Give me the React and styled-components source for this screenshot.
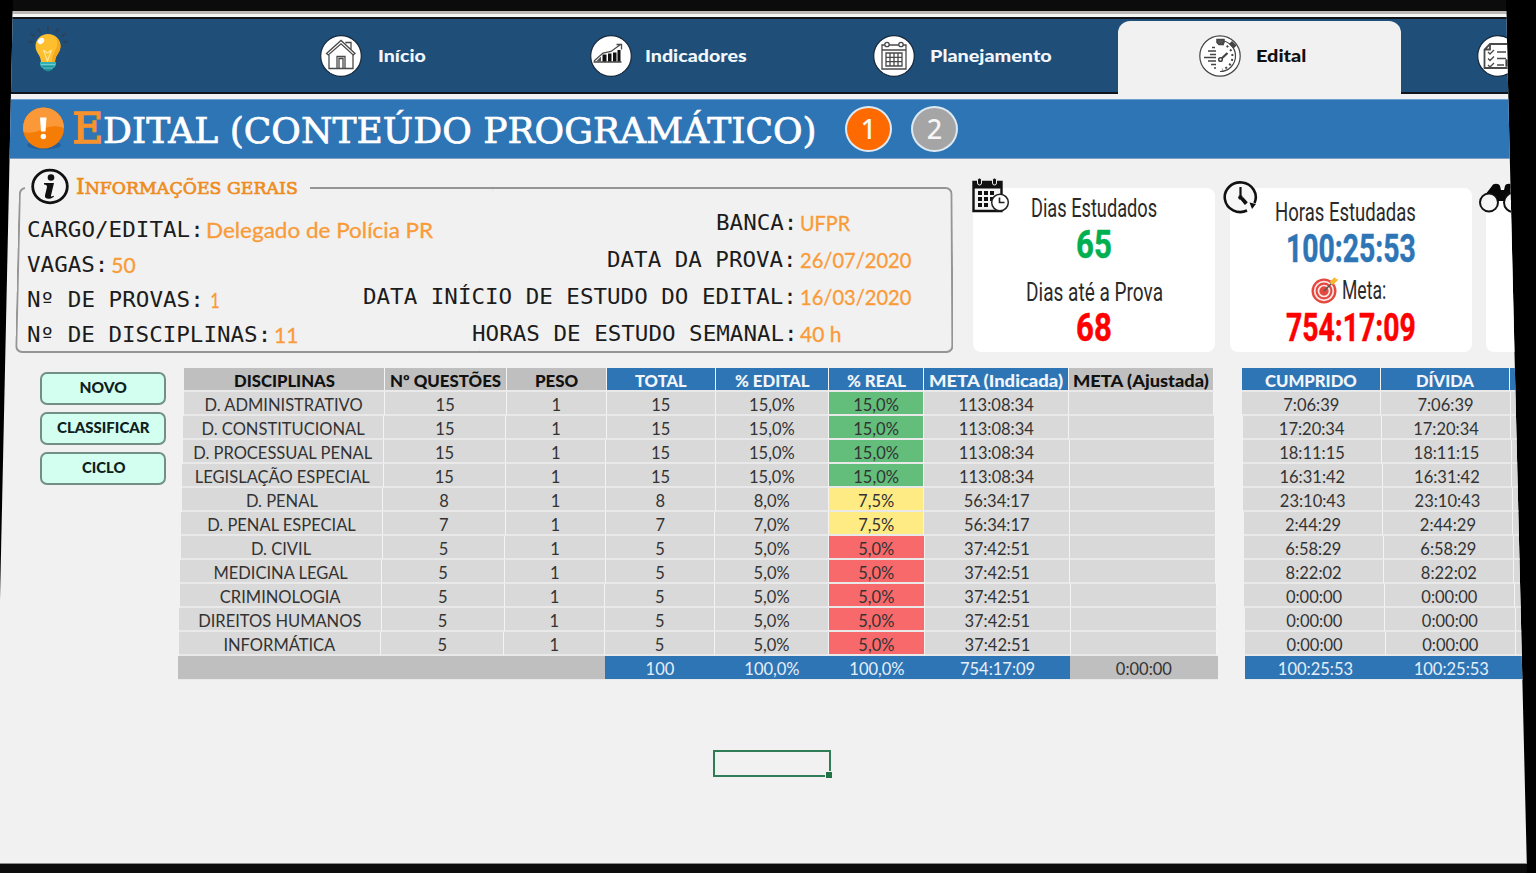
import { useLayoutEffect, useRef, useState } from "react";
import styled, { createGlobalStyle } from "styled-components";

// ------ data ------//
const disciplinas = [
  ["D. ADMINISTRATIVO", "15", "1", "15", "15,0%", "15,0%", "113:08:34", "7:06:39"],
  ["D. CONSTITUCIONAL", "15", "1", "15", "15,0%", "15,0%", "113:08:34", "17:20:34"],
  ["D. PROCESSUAL PENAL", "15", "1", "15", "15,0%", "15,0%", "113:08:34", "18:11:15"],
  ["LEGISLAÇÃO ESPECIAL", "15", "1", "15", "15,0%", "15,0%", "113:08:34", "16:31:42"],
  ["D. PENAL", "8", "1", "8", "8,0%", "7,5%", "56:34:17", "23:10:43"],
  ["D. PENAL ESPECIAL", "7", "1", "7", "7,0%", "7,5%", "56:34:17", "2:44:29"],
  ["D. CIVIL", "5", "1", "5", "5,0%", "5,0%", "37:42:51", "6:58:29"],
  ["MEDICINA LEGAL", "5", "1", "5", "5,0%", "5,0%", "37:42:51", "8:22:02"],
  ["CRIMINOLOGIA", "5", "1", "5", "5,0%", "5,0%", "37:42:51", "0:00:00"],
  ["DIREITOS HUMANOS", "5", "1", "5", "5,0%", "5,0%", "37:42:51", "0:00:00"],
  ["INFORMÁTICA", "5", "1", "5", "5,0%", "5,0%", "37:42:51", "0:00:00"],
];
const realColors = { "15,0%": "#63be7b", "7,5%": "#ffeb84", "5,0%": "#f8696b" };

const headers = [
  { text: "DISCIPLINAS", w: 101 },
  { text: "Nº QUESTÕES", w: 111 },
  { text: "PESO", w: 43 },
  { text: "TOTAL", w: 52, blue: true },
  { text: "% EDITAL", w: 75, blue: true },
  { text: "% REAL", w: 59, blue: true },
  { text: "META (Indicada)", w: 134, blue: true },
  { text: "META (Ajustada)", w: 136 },
];

const leftInfo = [
  ["CARGO/EDITAL:", "Delegado de Polícia PR", 227],
  ["VAGAS:", "50", 24],
  ["Nº DE PROVAS:", " 1", 14],
  ["Nº DE DISCIPLINAS:", "11", 24],
];
const rightInfo = [
  ["BANCA:", "UFPR", 50],
  ["DATA DA PROVA:", "26/07/2020", 111],
  ["DATA INÍCIO DE ESTUDO DO EDITAL:", "16/03/2020", 111],
  ["HORAS DE ESTUDO SEMANAL:", "40 h", 41],
];

// ------ styled components start ------//
const GlobalStyle = createGlobalStyle`
  * { box-sizing: border-box; }
  body {
    margin: 0;
    background: #000;
    overflow: hidden;
  }
`;
const Page = styled.div`
  width: 1536px;
  height: 873px;
  overflow: hidden;
  background: #0c0c0c;
  padding-top: 11px;
  font-family: Lato, "Liberation Sans", sans-serif;
  clip-path: polygon(13px 0, 1506px 0, 1527px 873px, 0 873px, 0 600px);
`;
const Screen = styled.div`
  height: 853px;
  background: #f1f1f1;
  border-bottom: 1px solid #8c8c8c;
`;
const FitBox = styled.span`
  display: inline-block;
  flex: none;
  text-align: left;
  white-space: pre;
`;
const FitText = styled.span`
  display: inline-block;
  transform-origin: 0 50%;
`;
const TopLine = styled.div`
  height: 6px;
  background: linear-gradient(#bdb9b9 0 3px, #f6f6f6 3px);
`;
const Nav = styled.nav`
  display: flex;
  height: 77px;
  background: #1f4e78;
  border-top: 2px solid #10161c;
  border-bottom: 2px solid #10161c;
`;
const Brand = styled.div`
  flex: none;
  width: 269px;
  padding: 7px 0 0 28px;
`;
const Tab = styled.div`
  display: flex;
  align-items: center;
  flex: none;
  width: ${(p) => p.$width || 283}px;
  height: 73px;
  padding-left: ${(p) => p.$pad}px;
  gap: ${(p) => p.$gap}px;
  color: ${(p) => (p.$active ? "#111" : "#f2f6fa")};
  font-size: 17.5px;
  font-weight: 900;
  ${(p) =>
    p.$active &&
    `
    height: 75px;
    margin-top: 2px;
    padding-bottom: 6px;
    background: #f1f1f1;
    border-radius: 12px 12px 0 0;
  `}
  svg {
    flex: none;
  }
`;
const TitleBar = styled.header`
  display: flex;
  align-items: center;
  height: 60px;
  margin-top: 5px;
  padding-left: 22px;
  background: #2e75b6;
  border-top: 1px solid #6f9fce;
  border-bottom: 1px solid #7f9fc0;
`;
const Title = styled.h1`
  display: flex;
  align-items: baseline;
  width: 761px;
  margin: 0 0 0 7px;
  color: #fff;
  font: 400 35px/58px "DejaVu Serif", serif;
  -webkit-text-stroke: 0.7px currentColor;
`;
const Initial = styled.span`
  display: inline-block;
  color: #f7922d;
  font-size: 43px;
  -webkit-text-stroke: 1.4px currentColor;
`;
const Step = styled.div`
  width: 47px;
  height: 46px;
  margin: 0 19px 0 ${(p) => p.$ml || 0}px;
  border: 2px solid #dfe9f3;
  border-radius: 50%;
  background: ${(p) => p.$bg};
  color: #f6f6f6;
  font: 500 27px/42px "Noto Sans", sans-serif;
  text-align: center;
`;
const Summary = styled.section`
  display: flex;
  height: 209px;
  padding: 29px 0 0 17px;
`;
const InfoPanel = styled.div`
  position: relative;
  display: flex;
  flex: none;
  width: 936px;
  height: 164px;
  padding-left: 10px;
  &::before,
  &::after {
    content: "";
    position: absolute;
    top: -1px;
    bottom: -1px;
    width: calc(50% + 4px);
    border: 2px solid #959595;
  }
  &::before {
    left: 0;
    border-right: 0;
    border-radius: 7px 0 0 7px;
    transform: skewX(-1.3deg);
  }
  &::after {
    right: 0;
    border-left: 0;
    border-radius: 0 7px 7px 0;
    transform: skewX(0.3deg);
  }
`;
const Legend = styled.div`
  position: absolute;
  z-index: 1;
  left: 8px;
  top: -21px;
  display: flex;
  align-items: center;
  width: 285px;
  height: 40px;
  padding-left: 6px;
  gap: 7px;
  background: #f1f1f1;
  color: #ee8c1e;
  font: 400 17.5px/24px "DejaVu Serif", serif;
  -webkit-text-stroke: 0.7px currentColor;
  big {
    font-size: 22px;
  }
`;
const InfoList = styled.dl`
  position: relative;
  z-index: 1;
  flex: none;
  margin: 0;
  padding-top: ${(p) => p.$top}px;
  width: ${(p) => p.$width}px;
`;
const InfoRow = styled.div`
  display: flex;
  align-items: center;
  justify-content: ${(p) => p.$justify || "flex-start"};
  height: ${(p) => p.$h}px;
`;
const Label = styled.dt`
  display: flex;
  flex: none;
  color: #1c1c1c;
  font: 400 20.5px/30px "DejaVu Sans Mono", monospace;
`;
const Value = styled.dd`
  flex: none;
  width: ${(p) => (p.$width ? p.$width + "px" : "auto")};
  margin: 1px 0 0 3px;
  color: #f99b38;
  font-size: 21px;
  line-height: 30px;
  -webkit-text-stroke: 0.3px currentColor;
`;
const Card = styled.div`
  position: relative;
  display: flex;
  flex-direction: column;
  align-items: center;
  flex: none;
  width: 242px;
  height: 164px;
  margin-left: ${(p) => p.$ml}px;
  padding-top: ${(p) => p.$top || 0}px;
  border-radius: 8px;
  background: #fff;
  font-family: Roboto, sans-serif;
`;
const CardIcon = styled.div`
  position: absolute;
  left: ${(p) => p.$left}px;
  top: ${(p) => p.$y}px;
`;
const CardLabel = styled.div`
  display: flex;
  align-items: center;
  gap: 3px;
  height: 36px;
  margin-top: ${(p) => p.$mt || 0}px;
  padding-right: ${(p) => p.$pr || 0}px;
  color: #2a2a2a;
  font-size: 26px;
`;
const CardNumber = styled.div`
  height: 36px;
  color: ${(p) => p.$color};
  font-size: 39px;
  font-weight: 700;
  line-height: ${(p) => p.$lh || 38}px;
  -webkit-text-stroke: 0.5px currentColor;
`;
const Work = styled.section`
  display: flex;
  align-items: flex-start;
`;
const Actions = styled.div`
  display: flex;
  flex-direction: column;
  gap: 8px;
  width: 184px;
  padding: 4px 0 0 40px;
`;
const Button = styled.button`
  width: 126px;
  height: 33px;
  margin-bottom: -1px;
  padding: 0 0 3px;
  border: 2px solid #728f87;
  border-radius: 7px;
  background: #d2fff0;
  color: #10201c;
  font: 900 15.5px/20px Lato, sans-serif;
`;
const Table = styled.div`
  flex: none;
  width: ${(p) => p.$width}px;
  margin-right: ${(p) => p.$mr || 0}px;
`;
// rows get a little wider towards the bottom of the sheet
const Row = styled.div`
  display: grid;
  grid-template-columns: ${(p) => p.$cols};
  width: ${(p) => p.$base + p.$grow * p.$i}px;
  height: 24px;
  margin-left: ${(p) => p.$shift * p.$i}px;
`;
const Cell = styled.div`
  overflow: hidden;
  border-right: ${(p) => (p.$flat ? 0 : 1)}px solid #f4f4f4;
  border-bottom: ${(p) => (p.$flat ? 1 : 2)}px solid #e9e9e9;
  background: ${(p) => p.$bg || "#d9d9d9"};
  color: ${(p) => p.$color || "#333"};
  font-size: 16.5px;
  font-weight: ${(p) => (p.$bold ? 900 : 400)};
  line-height: 26px;
  text-align: center;
  white-space: nowrap;
`;
const Selection = styled.div`
  position: relative;
  width: 118px;
  height: 27px;
  margin: 70px 0 0 713px;
  border: 2px solid #2f7d57;
  &::after {
    content: "";
    position: absolute;
    right: -3px;
    bottom: -3px;
    width: 6px;
    height: 6px;
    border: 1px solid #f1f1f1;
    border-width: 1px 0 0 1px;
    background: #217346;
  }
`;
// ------ styled components end ------//

// squeezes or stretches a line of text to the given width
const Fit = ({ w, children }) => {
  const ref = useRef(null);
  const [scale, setScale] = useState(1);
  useLayoutEffect(() => {
    setScale(w / ref.current.offsetWidth);
  }, [w]);
  return (
    <FitBox style={{ width: w }}>
      <FitText ref={ref} style={{ transform: `scaleX(${scale})` }}>
        {children}
      </FitText>
    </FitBox>
  );
};

// ------ icons ------//
const Bulb = () => (
  <svg width="40" height="48" viewBox="0 0 40 48">
    <g stroke="#2d4258" strokeWidth="1.8" strokeLinecap="round">
      <path d="M20 1v3M10 3l2 3M30 3l-2 3M3 8l3 2M37 8l-3 2M1 16h3M36 16h3" />
    </g>
    <path d="M20 8c-7 0-12.500 5-12.500 12 0 7 5 8 5.500 16h14c.5-8 5.500-9 5.500-16 0-7-5.500-12-12.500-12z" fill="#fdbf2d" />
    <path d="M27 11c3 3 3 9 0 14-2 4-3 7-3 11h3c.5-8 5.500-9 5.500-16 0-4-2-7-5.500-9z" fill="#f5a81c" />
    <ellipse cx="13" cy="15" rx="3.500" ry="2.600" fill="#fff" transform="rotate(-40 13 15)" />
    <path d="M15.500 24l4 11 4-11M15.500 24l4 3 4-3" fill="none" stroke="#ffe596" strokeWidth="1.200" />
    <path d="M12 36h16v3l-2 3H14l-2-3z" fill="#35b0b5" />
    <path d="M14 40h12l-2 4-4 1.500-4-1.500z" fill="#1e8f98" />
    <path d="M13 38.500h14M15 42h10" stroke="#7dd3d4" strokeWidth=".8" />
  </svg>
);

const Disc = ({ stroke = "#16283a", children }) => (
  <svg width="42" height="42" viewBox="0 0 42 42" fill="none" stroke="#4a4a4a" strokeWidth="1.300">
    <circle cx="21" cy="21" r="20.300" fill="#fff" stroke={stroke} strokeWidth="1.200" />
    {children}
  </svg>
);

const HomeIcon = () => (
  <Disc>
    <path d="M6.500 18.500L21 5.500l14 13-1.800 1.500L21 8.800 8.300 20z" />
    <path d="M9 20v13.500h24V20M17 33.500V21.500h8v12M19 33.500V23.500h4v10" />
    <path d="M26 8.500V7.500h5v7" />
  </Disc>
);
const ChartIcon = () => (
  <Disc>
    <path d="M3.500 27h28M4 26l9-8 8-1.500 9.500-7M26.500 9.500h5v5" />
    <path d="M12.500 19.500h4v7h-4zM18 18.500h3.500v8H18zM23 17.500h3.500v9H23zM27.500 15h3v11.500h-3z" fill="#111" stroke="none" />
    <path d="M6 26.500l5-5v5z" fill="#555" stroke="none" />
  </Disc>
);
const PlanIcon = () => (
  <Disc>
    <path d="M9 10h24v24H9zM9 15h24" />
    <circle cx="14" cy="9.500" r="2.200" fill="#fff" />
    <circle cx="28" cy="9.500" r="2.200" fill="#fff" />
    <path d="M13 18h16v13H13zM13 22.300h16M13 26.600h16M17 18v13M21 18v13M25 18v13" />
  </Disc>
);
const TimerIcon = () => (
  <svg width="44" height="42" viewBox="0 0 44 42" fill="none" stroke="#444" strokeWidth="1.500">
    <circle cx="22" cy="21" r="20.200" fill="#fff" strokeWidth="1.200" />
    <path d="M22 5.500a15.500 15.500 0 0 1 0 31" strokeWidth="1.200" />
    <path d="M24 9a13 13 0 0 1 0 25.500" strokeDasharray="2 3" strokeWidth="2" />
    <path d="M14 12.500h3M10 16h8M12 19.500h6M6 22.500h12M10 26h8M13 29.500h5M16 33h2" />
    <path d="M19 4.500h7v3l-2 2h-3l-2-2z" fill="#555" />
    <path d="M34 7l3.500 3.500-2 2L32 9z" fill="#444" />
    <path d="M21.500 25.500l8-7.500" strokeWidth="2.200" />
    <circle cx="22.500" cy="24.500" r="1.800" fill="#fff" />
  </svg>
);
const ListIcon = () => (
  <Disc>
    <path d="M13 9h26v24H7.500V14.500zM13 9v5.500H7.500" strokeWidth="1.800" />
    <path d="M11 17l2 2 4-4M11 23.500l2 2 4-4M11 30l2 2 4-4M20 17h9M20 23.500h9M20 30h7" />
    <path d="M29 25h8v6h-8z" fill="#222" />
  </Disc>
);
const AlertIcon = () => (
  <svg width="43" height="46" viewBox="0 0 43 46">
    <ellipse cx="22" cy="39" rx="17" ry="4.500" fill="#1f5a92" opacity=".7" />
    <circle cx="21.500" cy="22" r="20.500" fill="#f57c05" />
    <path d="M1 22a20.500 20.500 0 0 1 41 0c-7-3-15-2-21 1s-14 5-19.500 3z" fill="#fb9837" />
    <path d="M18 11.500h6.500l-1 14h-4.500z" fill="#fff" />
    <circle cx="21.300" cy="30.500" r="2.700" fill="#fff" />
  </svg>
);
const InfoIcon = () => (
  <svg width="38" height="38" viewBox="0 0 38 38">
    <ellipse cx="19" cy="18.500" rx="17.300" ry="16.300" fill="#f4f4f4" stroke="#111" strokeWidth="2.800" />
    <circle cx="20" cy="9.500" r="3.300" fill="#111" />
    <path d="M13 15h10l-3 12.500c-.3 1.500 1 1.300 2.500.3l.5 1c-3 2.700-10 3.200-9-1.500l2-8.300c.3-1.300-.8-2.500-3-2.600z" fill="#111" />
  </svg>
);
const CalendarClock = () => (
  <svg width="38" height="36" viewBox="0 0 38 36">
    <path d="M1.500 5h28v29h-28z" fill="#f4f4f4" stroke="#111" strokeWidth="2.400" />
    <path d="M1 4h29v7.500H1z" fill="#111" />
    <rect x="5.500" y="1" width="4" height="7" rx="2" fill="#111" stroke="#f1f1f1" />
    <rect x="20.500" y="1" width="4" height="7" rx="2" fill="#111" stroke="#f1f1f1" />
    <path d="M6 14h4v4H6zM12 14h4v4h-4zM18 14h4v4h-4zM6 20h4v4H6zM12 20h4v4h-4zM6 26h4v4H6zM12 26h4v4h-4zM18 20h3v4h-3z" fill="#111" />
    <circle cx="28" cy="25.500" r="8.300" fill="#fff" stroke="#222" strokeWidth="1.500" />
    <path d="M27.500 20.500V25.500h5" fill="none" stroke="#222" strokeWidth="1.600" />
  </svg>
);
const ClockIcon = () => (
  <svg width="36" height="34" viewBox="0 0 36 34">
    <path d="M24 30.500A15.500 14.800 0 1 1 31.500 23" fill="#f7f7f7" stroke="#111" strokeWidth="2.600" />
    <path d="M26.500 22.500l6.500 1.500-4 5z" fill="#111" />
    <path d="M17.500 7v10.500l5 6.500" fill="none" stroke="#111" strokeWidth="2.200" />
    <circle cx="17.500" cy="17.500" r="2.300" fill="#111" />
    <path d="M19 18.500l4.500 5" stroke="#111" strokeWidth="3.400" />
  </svg>
);
const Binoculars = () => (
  <svg width="60" height="32" viewBox="0 0 60 32">
    <path d="M2 18L13 4c1-3 7-3 8 0l1 4h3l1-4c1-3 6-3 8 0l3 14H17z" fill="#080808" />
    <circle cx="10" cy="20.500" r="9" fill="#f6f6f6" stroke="#111" strokeWidth="2" />
    <circle cx="34.500" cy="20.500" r="9.500" fill="#f6f6f6" stroke="#111" strokeWidth="2" />
    <path d="M18 14h8v5h-8z" fill="#080808" />
  </svg>
);
const Target = () => (
  <svg width="28" height="28" viewBox="0 0 28 28" fill="none">
    <circle cx="13" cy="15" r="12.500" fill="#e4483f" />
    <circle cx="13" cy="15" r="9.300" stroke="#fbe9e7" strokeWidth="1.700" />
    <circle cx="13" cy="15" r="5.500" stroke="#fbe9e7" strokeWidth="1.700" />
    <path d="M13 15l10-10" stroke="#555" strokeWidth="1.500" />
    <path d="M19 5.500l5-4.500.8 2L27.500 3.500l-5 5-2.500-.5z" fill="#f5b82e" />
  </svg>
);

const LabelText = ({ text }) => <Fit w={text.length * 13.56}>{text}</Fit>;

const mainCols = "201fr 122fr 100fr 109fr 113fr 95fr 145fr 145fr";
const main = { $cols: mainCols, $base: 1030, $grow: 0.8, $shift: -0.5 };
const side = { $cols: "139fr 129fr 32fr", $base: 300, $grow: 0.35, $shift: 0.25 };

const App = () => {
  return (
    <Page>
      <GlobalStyle />
      <Screen>
        <TopLine />
        <Nav>
          <Brand>
            <Bulb />
          </Brand>
          <Tab $pad={51} $gap={16}>
            <HomeIcon />
            <Fit w={48}>Início</Fit>
          </Tab>
          <Tab $pad={38} $gap={13}>
            <ChartIcon />
            <Fit w={102}>Indicadores</Fit>
          </Tab>
          <Tab $pad={38} $gap={15}>
            <PlanIcon />
            <Fit w={122}>Planejamento</Fit>
          </Tab>
          <Tab $pad={80} $gap={14} $active>
            <TimerIcon />
            <Fit w={50}>Edital</Fit>
          </Tab>
          <Tab $pad={76} $gap={14}>
            <ListIcon />
          </Tab>
        </Nav>
        <TitleBar>
          <AlertIcon />
          <Title>
            <Initial>
              <Fit w={31}>E</Fit>
            </Initial>
            <Fit w={714}>DITAL (CONTEÚDO PROGRAMÁTICO)</Fit>
          </Title>
          <Step $bg="#ff6a00" $ml={12}>1</Step>
          <Step $bg="#a5a5a5">2</Step>
        </TitleBar>

        <Summary>
          <InfoPanel>
            <Legend>
              <InfoIcon />
              <Fit w={222}>
                <big>I</big>NFORMAÇÕES GERAIS
              </Fit>
            </Legend>
            <InfoList $top={24} $width={326}>
              {leftInfo.map(([label, value, w]) => (
                <InfoRow key={label} $h={35}>
                  <Label>
                    <LabelText text={label} />
                  </Label>
                  <Value>
                    <Fit w={w}>{value}</Fit>
                  </Value>
                </InfoRow>
              ))}
            </InfoList>
            <InfoList $top={16} $width={600}>
              {rightInfo.map(([label, value, w]) => (
                <InfoRow key={label} $h={37} $justify="flex-end">
                  <Label>
                    <LabelText text={label} />
                  </Label>
                  <Value $width={153}>
                    <Fit w={w}>{value}</Fit>
                  </Value>
                </InfoRow>
              ))}
            </InfoList>
          </InfoPanel>

          <Card $ml={20} $top={2}>
            <CardIcon $left={-1} $y={-11}>
              <CalendarClock />
            </CardIcon>
            <CardLabel>
              <Fit w={126}>Dias Estudados</Fit>
            </CardLabel>
            <CardNumber $color="#00b050">
              <Fit w={36}>65</Fit>
            </CardNumber>
            <CardLabel $mt={12}>
              <Fit w={137}>Dias até a Prova</Fit>
            </CardLabel>
            <CardNumber $color="#ff0000" $lh={36}>
              <Fit w={36}>68</Fit>
            </CardNumber>
          </Card>
          <Card $ml={15} $top={6}>
            <CardIcon $left={-7} $y={-8}>
              <ClockIcon />
            </CardIcon>
            <CardLabel $pr={11}>
              <Fit w={141}>Horas Estudadas</Fit>
            </CardLabel>
            <CardNumber $color="#2e75b6" $lh={39}>
              <Fit w={130}>100:25:53</Fit>
            </CardNumber>
            <CardLabel $mt={6} $pr={6}>
              <Target />
              <Fit w={44}>Meta:</Fit>
            </CardLabel>
            <CardNumber $color="#ff0000" $lh={40}>
              <Fit w={130}>754:17:09</Fit>
            </CardNumber>
          </Card>
          <Card $ml={14}>
            <CardIcon $left={-7} $y={-6}>
              <Binoculars />
            </CardIcon>
          </Card>
        </Summary>

        <Work>
          <Actions>
            <Button>
              <Fit w={47}>NOVO</Fit>
            </Button>
            <Button>
              <Fit w={93}>CLASSIFICAR</Fit>
            </Button>
            <Button>
              <Fit w={43}>CICLO</Fit>
            </Button>
          </Actions>
          <Table $width={1030} $mr={28}>
            <Row {...main} $i={0}>
              {headers.map((h) => (
                <Cell key={h.text} $bold $bg={h.blue ? "#2e75b6" : "#bfbfbf"} $color={h.blue ? "#f2f6fa" : "#111"}>
                  <Fit w={h.w}>{h.text}</Fit>
                </Cell>
              ))}
            </Row>
            {disciplinas.map((d, i) => (
              <Row key={d[0]} {...main} $i={i + 1}>
                {d.slice(0, 7).map((text, c) => (
                  <Cell key={c} $bg={c === 5 && realColors[text]}>
                    {text}
                  </Cell>
                ))}
                <Cell />
              </Row>
            ))}
            <Row {...main} $cols="423fr 109fr 113fr 95fr 144fr 146fr" $i={12}>
              <Cell $flat $bg="#bfbfbf" />
              {["100", "100,0%", "100,0%", "754:17:09"].map((text, c) => (
                <Cell key={c} $flat $bg="#2e75b6" $color="#e6eff8">
                  {text}
                </Cell>
              ))}
              <Cell $flat $bg="#bfbfbf">0:00:00</Cell>
            </Row>
          </Table>
          <Table $width={294}>
            <Row {...side} $i={0}>
              <Cell $bold $bg="#2e75b6" $color="#f2f6fa">
                <Fit w={92}>CUMPRIDO</Fit>
              </Cell>
              <Cell $bold $bg="#2e75b6" $color="#f2f6fa">
                <Fit w={58}>DÍVIDA</Fit>
              </Cell>
              <Cell $bg="#2e75b6" />
            </Row>
            {disciplinas.map((d, i) => (
              <Row key={d[0]} {...side} $i={i + 1}>
                <Cell>{d[7]}</Cell>
                <Cell>{d[7]}</Cell>
                <Cell />
              </Row>
            ))}
            <Row {...side} $i={12}>
              <Cell $flat $bg="#2e75b6" $color="#e6eff8">100:25:53</Cell>
              <Cell $flat $bg="#2e75b6" $color="#e6eff8">100:25:53</Cell>
              <Cell $flat $bg="#2e75b6" />
            </Row>
          </Table>
        </Work>
        <Selection />
      </Screen>
    </Page>
  );
};

export default App;
